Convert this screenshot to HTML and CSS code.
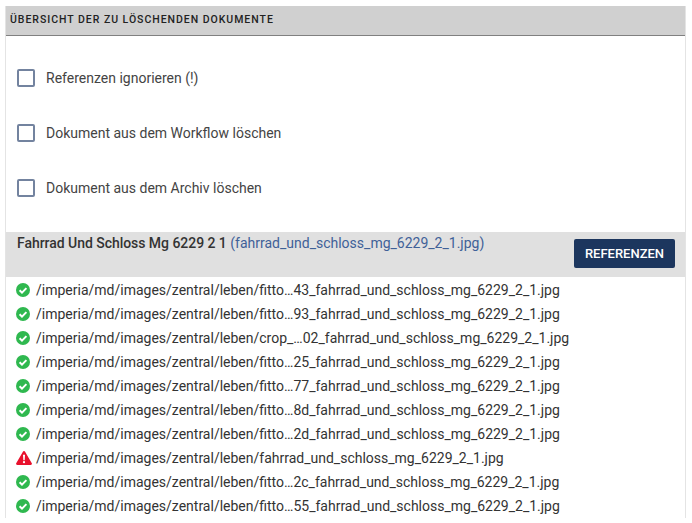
FILE: index.html
```html
<!DOCTYPE html>
<html lang="de">
<head>
    <title>Übersicht der zu löschenden Dokumente</title>
    <meta charset="UTF-8"/>
    <link rel="stylesheet" href="styles.css">
</head>
<body>
    <svg class="sprites" width="0" height="0">
        <symbol id="ok" viewBox="0 0 14 14">
            <circle cx="7" cy="7" r="7" fill="#2fb84f"/>
            <path d="M3.6 7.2l2.4 2.4 4.4-4.5" fill="none" stroke="#fff" stroke-width="2"/>
        </symbol>
        <symbol id="warn" viewBox="0 0 16 14">
            <path d="M8 0c.5 0 .9.3 1.1.7l6.7 11.5c.4.8-.1 1.8-1.1 1.8H1.3C.3 14-.2 13 .2 12.2L6.9.7C7.1.3 7.5 0 8 0z" fill="#e8112d"/>
            <path d="M7 3.8h2l-.3 5.4H7.3z" fill="#fff"/>
            <circle cx="8" cy="11.2" r="1.1" fill="#fff"/>
        </symbol>
    </svg>
    <div class="panel">
        <div class="panel-title">Übersicht der zu löschenden Dokumente</div>
        <div class="options">
            <label class="option"><span class="box"></span>Referenzen ignorieren (!)</label>
            <label class="option"><span class="box"></span>Dokument aus dem Workflow löschen</label>
            <label class="option"><span class="box"></span>Dokument aus dem Archiv löschen</label>
        </div>
        <div class="doc-head">
            <div class="doc-name"><b>Fahrrad Und Schloss Mg 6229 2 1</b> <a href="#">(fahrrad_und_schloss_mg_6229_2_1.jpg)</a></div>
            <button type="button">Referenzen</button>
        </div>
        <ul class="refs">
            <li><svg class="ico"><use href="#ok"/></svg>/imperia/md/images/zentral/leben/fitto…43_fahrrad_und_schloss_mg_6229_2_1.jpg</li>
            <li><svg class="ico"><use href="#ok"/></svg>/imperia/md/images/zentral/leben/fitto…93_fahrrad_und_schloss_mg_6229_2_1.jpg</li>
            <li><svg class="ico"><use href="#ok"/></svg>/imperia/md/images/zentral/leben/crop_…02_fahrrad_und_schloss_mg_6229_2_1.jpg</li>
            <li><svg class="ico"><use href="#ok"/></svg>/imperia/md/images/zentral/leben/fitto…25_fahrrad_und_schloss_mg_6229_2_1.jpg</li>
            <li><svg class="ico"><use href="#ok"/></svg>/imperia/md/images/zentral/leben/fitto…77_fahrrad_und_schloss_mg_6229_2_1.jpg</li>
            <li><svg class="ico"><use href="#ok"/></svg>/imperia/md/images/zentral/leben/fitto…8d_fahrrad_und_schloss_mg_6229_2_1.jpg</li>
            <li><svg class="ico"><use href="#ok"/></svg>/imperia/md/images/zentral/leben/fitto…2d_fahrrad_und_schloss_mg_6229_2_1.jpg</li>
            <li><svg class="ico ico-warn"><use href="#warn"/></svg>/imperia/md/images/zentral/leben/fahrrad_und_schloss_mg_6229_2_1.jpg</li>
            <li><svg class="ico"><use href="#ok"/></svg>/imperia/md/images/zentral/leben/fitto…2c_fahrrad_und_schloss_mg_6229_2_1.jpg</li>
            <li><svg class="ico"><use href="#ok"/></svg>/imperia/md/images/zentral/leben/fitto…55_fahrrad_und_schloss_mg_6229_2_1.jpg</li>
        </ul>
    </div>
</body>
</html>
```

FILE: styles.css
```css
html, body {
    margin: 0;
    height: 100%;
    overflow: hidden;
    background: #fff;
}
body {
    padding: 6px 6px 0 5px;
    box-sizing: border-box;
    font-family: Roboto, "Liberation Sans", sans-serif;
    font-size: 14px;
    color: #333;
}
.sprites {
    position: absolute;
}
.panel {
    border-left: 1px solid #e4e4e4;
    border-right: 1px solid #e4e4e4;
}
.panel-title {
    height: 29px;
    line-height: 28px;
    padding-left: 4px;
    background: #d0d0d0;
    border-bottom: 1px solid #808080;
    font-size: 10.5px;
    font-weight: 500;
    letter-spacing: 0.97px;
    text-transform: uppercase;
    color: #222;
}
.options {
    display: flex;
    flex-direction: column;
    gap: 35px;
    padding: 32px 11px 34px;
}
.option {
    display: flex;
    align-items: center;
    height: 20px;
    color: #444;
}
.box {
    width: 18px;
    height: 18px;
    margin-right: 11px;
    box-sizing: border-box;
    border: 2px solid #73839f;
    border-radius: 2px;
}
.doc-head {
    display: flex;
    justify-content: space-between;
    align-items: flex-start;
    height: 45px;
    padding: 0 10px 0 11px;
    background: #e0e0e0;
}
.doc-name {
    line-height: 22px;
}
.doc-name b {
    font-weight: 500;
    letter-spacing: -0.04px;
    color: #333;
}
a {
    text-decoration: none;
    color: #3f6198;
}
button {
    margin-top: 7px;
    width: 101px;
    height: 29px;
    border: 0;
    border-radius: 2px;
    background: #1c365e;
    color: #fff;
    font-family: inherit;
    font-size: 13px;
    font-weight: 500;
    text-transform: uppercase;
}
.refs {
    list-style: none;
    margin: 0;
    padding: 1px 0 0 10px;
}
.refs li {
    display: flex;
    align-items: center;
    height: 24px;
}
.ico {
    width: 14px;
    height: 14px;
    margin-right: 6px;
}
.ico-warn {
    width: 16px;
    margin-right: 4px;
}
```
